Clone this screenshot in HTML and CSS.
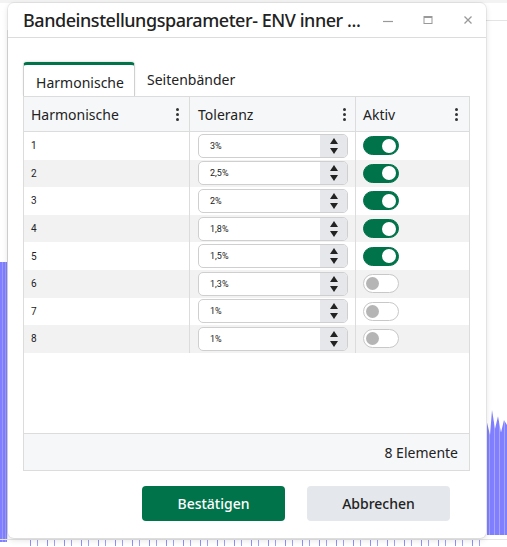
FILE: index.html
```html
<!DOCTYPE html>
<html lang="de">
<head>
<meta charset="utf-8">
<link rel="stylesheet" href="styles.css">
</head>
<body>
<div class="backdrop">
  <div class="bg-topline"></div>
  <div class="bg-hline"></div>
  <div class="bg-vline"></div>
  <div class="bg-bars-left"></div>
  <div class="bg-bars-right"></div>
  <div class="bg-ticks"></div>
  <div class="bg-axis"></div>
</div>

<div class="dialog">
  <div class="titlebar">
    <div class="title">Bandeinstellungsparameter- ENV inner ...</div>
    <div class="win-btns">
      <svg width="12" height="12" viewBox="0 0 12 12"><path d="M1 7.5h10" stroke="#999" stroke-width="1.2"/></svg>
      <svg width="12" height="12" viewBox="0 0 12 12"><rect x="2" y="2.5" width="8" height="7" fill="none" stroke="#999" stroke-width="1"/><path d="M2 3h8" stroke="#999" stroke-width="2"/></svg>
      <svg width="12" height="12" viewBox="0 0 12 12"><path d="M2.5 2.5l7 7M9.5 2.5l-7 7" stroke="#999" stroke-width="1.3"/></svg>
    </div>
  </div>

  <div class="body">
    <div class="tabs">
      <div class="tab active">Harmonische</div>
      <div class="tab">Seitenbänder</div>
    </div>

    <div class="grid">
      <div class="row head">
        <div class="cell c1">Harmonische<span class="dots"><i></i><i></i><i></i></span></div>
        <div class="cell c2">Toleranz<span class="dots"><i></i><i></i><i></i></span></div>
        <div class="cell c3">Aktiv<span class="dots"><i></i><i></i><i></i></span></div>
      </div>

      <div class="rows">
        <div class="row"><div class="cell c1 num">1</div><div class="cell c2"><div class="spin"><span class="val">3%</span><span class="arrows"><b class="up"></b><b class="down"></b></span></div></div><div class="cell c3"><span class="tog on"></span></div></div>
        <div class="row alt"><div class="cell c1 num">2</div><div class="cell c2"><div class="spin"><span class="val">2,5%</span><span class="arrows"><b class="up"></b><b class="down"></b></span></div></div><div class="cell c3"><span class="tog on"></span></div></div>
        <div class="row"><div class="cell c1 num">3</div><div class="cell c2"><div class="spin"><span class="val">2%</span><span class="arrows"><b class="up"></b><b class="down"></b></span></div></div><div class="cell c3"><span class="tog on"></span></div></div>
        <div class="row alt"><div class="cell c1 num">4</div><div class="cell c2"><div class="spin"><span class="val">1,8%</span><span class="arrows"><b class="up"></b><b class="down"></b></span></div></div><div class="cell c3"><span class="tog on"></span></div></div>
        <div class="row"><div class="cell c1 num">5</div><div class="cell c2"><div class="spin"><span class="val">1,5%</span><span class="arrows"><b class="up"></b><b class="down"></b></span></div></div><div class="cell c3"><span class="tog on"></span></div></div>
        <div class="row alt"><div class="cell c1 num">6</div><div class="cell c2"><div class="spin"><span class="val">1,3%</span><span class="arrows"><b class="up"></b><b class="down"></b></span></div></div><div class="cell c3"><span class="tog"></span></div></div>
        <div class="row"><div class="cell c1 num">7</div><div class="cell c2"><div class="spin"><span class="val">1%</span><span class="arrows"><b class="up"></b><b class="down"></b></span></div></div><div class="cell c3"><span class="tog"></span></div></div>
        <div class="row alt"><div class="cell c1 num">8</div><div class="cell c2"><div class="spin"><span class="val">1%</span><span class="arrows"><b class="up"></b><b class="down"></b></span></div></div><div class="cell c3"><span class="tog"></span></div></div>
      </div>

      <div class="footer">8 Elemente</div>
    </div>

    <div class="actions">
      <button class="btn primary">Bestätigen</button>
      <button class="btn secondary">Abbrechen</button>
    </div>
  </div>
</div>
</body>
</html>
```

FILE: styles.css
```css
* { box-sizing: border-box; }
html, body { margin: 0; padding: 0; }
body {
  width: 507px;
  height: 547px;
  overflow: hidden;
  background: #fff;
  font-family: "Noto Sans", "Open Sans", sans-serif;
  color: #222;
  position: relative;
}

/* background application (behind the modal) */
.backdrop { position: absolute; inset: 0; }
.bg-topline { position: absolute; left: 0; top: 0; width: 507px; height: 3px; background: #f3f3f3; }
.bg-hline { position: absolute; left: 486px; top: 20px; width: 21px; height: 1px; background: #e4e4e4; }
.bg-vline { position: absolute; left: 7px; top: 30px; width: 1px; height: 510px; background: #e6e6e6; }
.bg-axis { position: absolute; left: 0; top: 539px; width: 507px; height: 1px; background: #e6e6e6; }
.bg-bars-left {
  position: absolute; left: 0; top: 262px; width: 7px; height: 280px;
  background: repeating-linear-gradient(90deg, #7f7fff 0 2px, #9a9aff 2px 3px);
}
.bg-bars-right {
  position: absolute; left: 487px; top: 410px; width: 20px; height: 125px;
  background: repeating-linear-gradient(90deg, #7f7fff 0 2px, #a5a5ff 2px 3px, #8080ff 3px 5px);
  clip-path: polygon(0 10%, 15% 20%, 25% 0, 40% 15%, 55% 5%, 70% 18%, 85% 8%, 100% 12%, 100% 100%, 0 100%);
}
.bg-ticks {
  position: absolute; left: 30px; top: 540px; width: 455px; height: 6px;
  background: repeating-linear-gradient(90deg, #9090ff 0 1px, transparent 1px 7px, #a0a0ff 7px 8px, transparent 8px 17px);
}

/* dialog */
.dialog {
  position: absolute;
  left: 8px; top: 3px;
  width: 478px; height: 535px;
  background: #fff;
  border-radius: 6px;
  box-shadow: 0 0 0 1px rgba(0,0,0,0.06), 0 2px 6px rgba(0,0,0,0.12);
  display: flex; flex-direction: column;
}
.titlebar {
  height: 35px;
  border-bottom: 1px solid #dcdcdc;
  display: flex; align-items: center;
  padding: 0 0 0 15px;
}
.title {
  width: 345px;
  font-size: 18px;
  font-weight: 500;
  color: #222;
  letter-spacing: -0.45px;
  white-space: nowrap;
  overflow: hidden;
}
.win-btns { display: flex; gap: 28px; align-items: center; padding-left: 14px; }
.win-btns svg { display: block; }

.body { padding: 23px 16px 0 15px; display: flex; flex-direction: column; }

.tabs { display: flex; align-items: flex-end; height: 35px; }
.tab {
  font-size: 14px;
  color: #222;
  padding: 0 12px;
  height: 34px;
  display: flex; align-items: center;
}
.tab.active {
  width: 112px;
  justify-content: center;
  border: 1px solid #d0d0d0;
  border-top: 3px solid #00734a;
  border-bottom: none;
  border-radius: 4px 4px 0 0;
  padding: 3px 0 0 2px;
  box-shadow: 0 -1px 2px rgba(0,0,0,0.1);
}

.grid {
  border: 1px solid #dcdcdc;
  height: 375px;
  display: flex; flex-direction: column;
}
.row { display: flex; height: 27.6px; }
.row.alt { background: #f2f2f2; }
.row.head { height: 35px; background: #f6f7f8; border-bottom: 1px solid #dcdcdc; }
.rows { flex: 1; }
.cell { display: flex; align-items: center; position: relative; }
.c1 { width: 166px; padding-left: 7px; border-right: 1px solid #dcdcdc; }
.c2 { width: 166px; padding-left: 8px; border-right: 1px solid #dcdcdc; }
.c3 { flex: 1; padding-left: 7px; }
.head .cell { font-size: 14px; color: #222; }
.dots {
  position: absolute; right: 9px; top: 11px;
  display: flex; flex-direction: column; gap: 2px;
}
.dots i { display: block; width: 3px; height: 3px; border-radius: 50%; background: #333; }
.c3 .dots { right: 11px; }
.c1 .dots { right: 10px; }
.num { font-family: "Roboto", "Liberation Sans", sans-serif; font-size: 10px; color: #222; }

.spin {
  width: 150px; height: 24px;
  border: 1px solid #cfcfcf;
  border-radius: 5px;
  display: flex; overflow: hidden;
  background: #fff;
}
.val {
  flex: 1;
  font-family: "Roboto", "Liberation Sans", sans-serif;
  font-size: 9px;
  color: #222;
  padding-left: 11px;
  display: flex; align-items: center;
}
.arrows {
  width: 27px;
  background: #e5e7ea;
  display: flex; flex-direction: column; align-items: center; justify-content: center; gap: 4px;
}
.arrows b { display: block; width: 0; height: 0; border-left: 4px solid transparent; border-right: 4px solid transparent; }
.arrows .up { border-bottom: 6px solid #222; }
.arrows .down { border-top: 6px solid #222; }

.tog {
  display: block;
  width: 36px; height: 19px;
  border-radius: 10px;
  border: 1px solid #c8c8c8;
  background: #fff;
  position: relative;
}
.tog::after {
  content: "";
  position: absolute; left: 2px; top: 2px;
  width: 13px; height: 13px; border-radius: 50%;
  background: #b5b5b5;
}
.tog.on { background: #00734a; border-color: #00734a; }
.tog.on::after { left: auto; right: 2px; width: 14px; height: 14px; top: 1.5px; background: #fff; }

.footer {
  height: 37px;
  border-top: 1px solid #dcdcdc;
  background: #f6f7f8;
  font-size: 14px;
  color: #222;
  display: flex; align-items: center; justify-content: flex-end;
  padding-right: 11px;
}

.actions {
  display: flex; justify-content: flex-end; gap: 22px;
  padding: 15px 20px 0 0;
}
.btn {
  width: 143px; height: 35px;
  border: none; border-radius: 4px;
  font-family: "Noto Sans", "Open Sans", sans-serif;
  font-size: 14px;
  font-weight: 500;
}
.btn.primary { background: #00734a; color: #fff; }
.btn.secondary { background: #e4e7eb; color: #222; }
```
